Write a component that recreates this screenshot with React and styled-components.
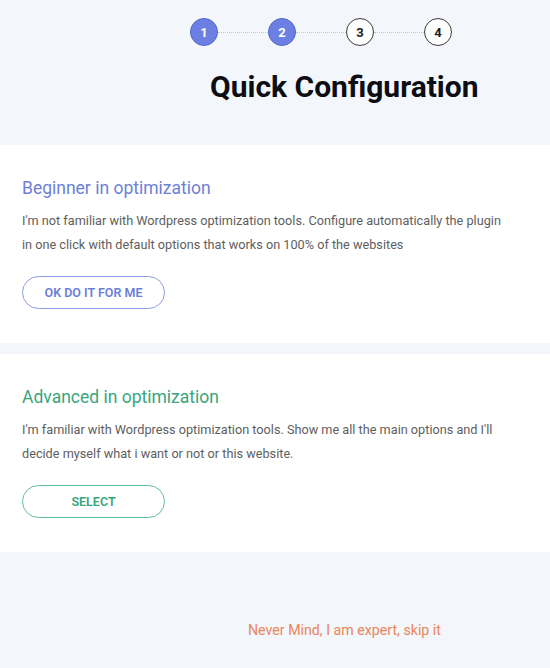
import React from "react";
import styled, { createGlobalStyle } from "styled-components";

const GlobalStyle = createGlobalStyle`
  html, body {
    margin: 0;
    padding: 0;
    background: #f3f6fa;
    font-family: Roboto, "Liberation Sans", Arial, sans-serif;
  }
`;

const STEPS = [
  { n: 1, done: true },
  { n: 2, done: true },
  { n: 3, done: false },
  { n: 4, done: false },
];

const OPTIONS = [
  {
    title: "Beginner in optimization",
    text: "I'm not familiar with Wordpress optimization tools. Configure automatically the plugin in one click with default options that works on 100% of the websites",
    action: "OK DO IT FOR ME",
    tone: "blue",
  },
  {
    title: "Advanced in optimization",
    text: "I'm familiar with Wordpress optimization tools. Show me all the main options and I'll decide myself what i want or not or this website.",
    action: "SELECT",
    tone: "green",
  },
];

const tones = {
  blue: { text: "#6c7fd8", border: "#8b9be0" },
  green: { text: "#3aa57c", border: "#5bbf9c" },
};

export default function App() {
  return (
    <>
      <GlobalStyle />
      <Page>
        <Header>
          <Stepper>
            {STEPS.map((s, i) => (
              <React.Fragment key={s.n}>
                {i > 0 && <Dots />}
                <Step $done={s.done}>{s.n}</Step>
              </React.Fragment>
            ))}
          </Stepper>
          <Title>Quick Configuration</Title>
        </Header>

        <Cards>
          {OPTIONS.map((o) => (
            <Card key={o.title}>
              <CardTitle $tone={o.tone}>{o.title}</CardTitle>
              <CardText>{o.text}</CardText>
              <Button $tone={o.tone}>{o.action}</Button>
            </Card>
          ))}
        </Cards>

        <Footer>
          <SkipLink href="#">Never Mind, I am expert, skip it</SkipLink>
        </Footer>
      </Page>
    </>
  );
}

const Page = styled.div`
  width: 550px;
  min-height: 668px;
  display: flex;
  flex-direction: column;
`;

const Header = styled.header`
  height: 145px;
  box-sizing: border-box;
  padding-top: 18px;
  display: flex;
  flex-direction: column;
`;

const Stepper = styled.div`
  display: flex;
  align-items: center;
  padding-left: 190px;
`;

const Step = styled.div`
  width: 28px;
  height: 28px;
  box-sizing: border-box;
  border-radius: 50%;
  display: flex;
  align-items: center;
  justify-content: center;
  font-size: 13px;
  font-weight: 700;
  border: 1px solid ${(p) => (p.$done ? "#5266cf" : "#3a3a3a")};
  background: ${(p) => (p.$done ? "#6b80e2" : "#fff")};
  color: ${(p) => (p.$done ? "#fff" : "#1e1e1e")};
`;

const Dots = styled.div`
  width: 50px;
  border-top: 1px dotted #c4c8d0;
`;

const Title = styled.h1`
  margin: 25px 0 0 210px;
  font-size: 30px;
  line-height: 31px;
  font-weight: 700;
  color: #0d0d14;
`;

const Cards = styled.div`
  display: flex;
  flex-direction: column;
  gap: 11px;
`;

const Card = styled.section`
  background: #fff;
  padding: 31px 22px 34px;
  display: flex;
  flex-direction: column;
  align-items: flex-start;
`;

const CardTitle = styled.h2`
  margin: 0 0 9px;
  font-size: 17.5px;
  line-height: 24px;
  font-weight: 400;
  color: ${(p) => tones[p.$tone].text};
`;

const CardText = styled.p`
  margin: 0 0 19px;
  font-size: 12.7px;
  line-height: 24px;
  color: #5e5e5e;
  max-width: 490px;
`;

const Button = styled.button`
  width: 143px;
  height: 33px;
  border-radius: 17px;
  background: #fff;
  border: 1px solid ${(p) => tones[p.$tone].border};
  color: ${(p) => tones[p.$tone].text};
  font-family: inherit;
  font-size: 12.5px;
  font-weight: 600;
  cursor: pointer;
`;

const Footer = styled.footer`
  display: flex;
  padding: 68px 0 0 248px;
`;

const SkipLink = styled.a`
  font-size: 14.2px;
  line-height: 20px;
  color: #e8875a;
  text-decoration: none;
`;
